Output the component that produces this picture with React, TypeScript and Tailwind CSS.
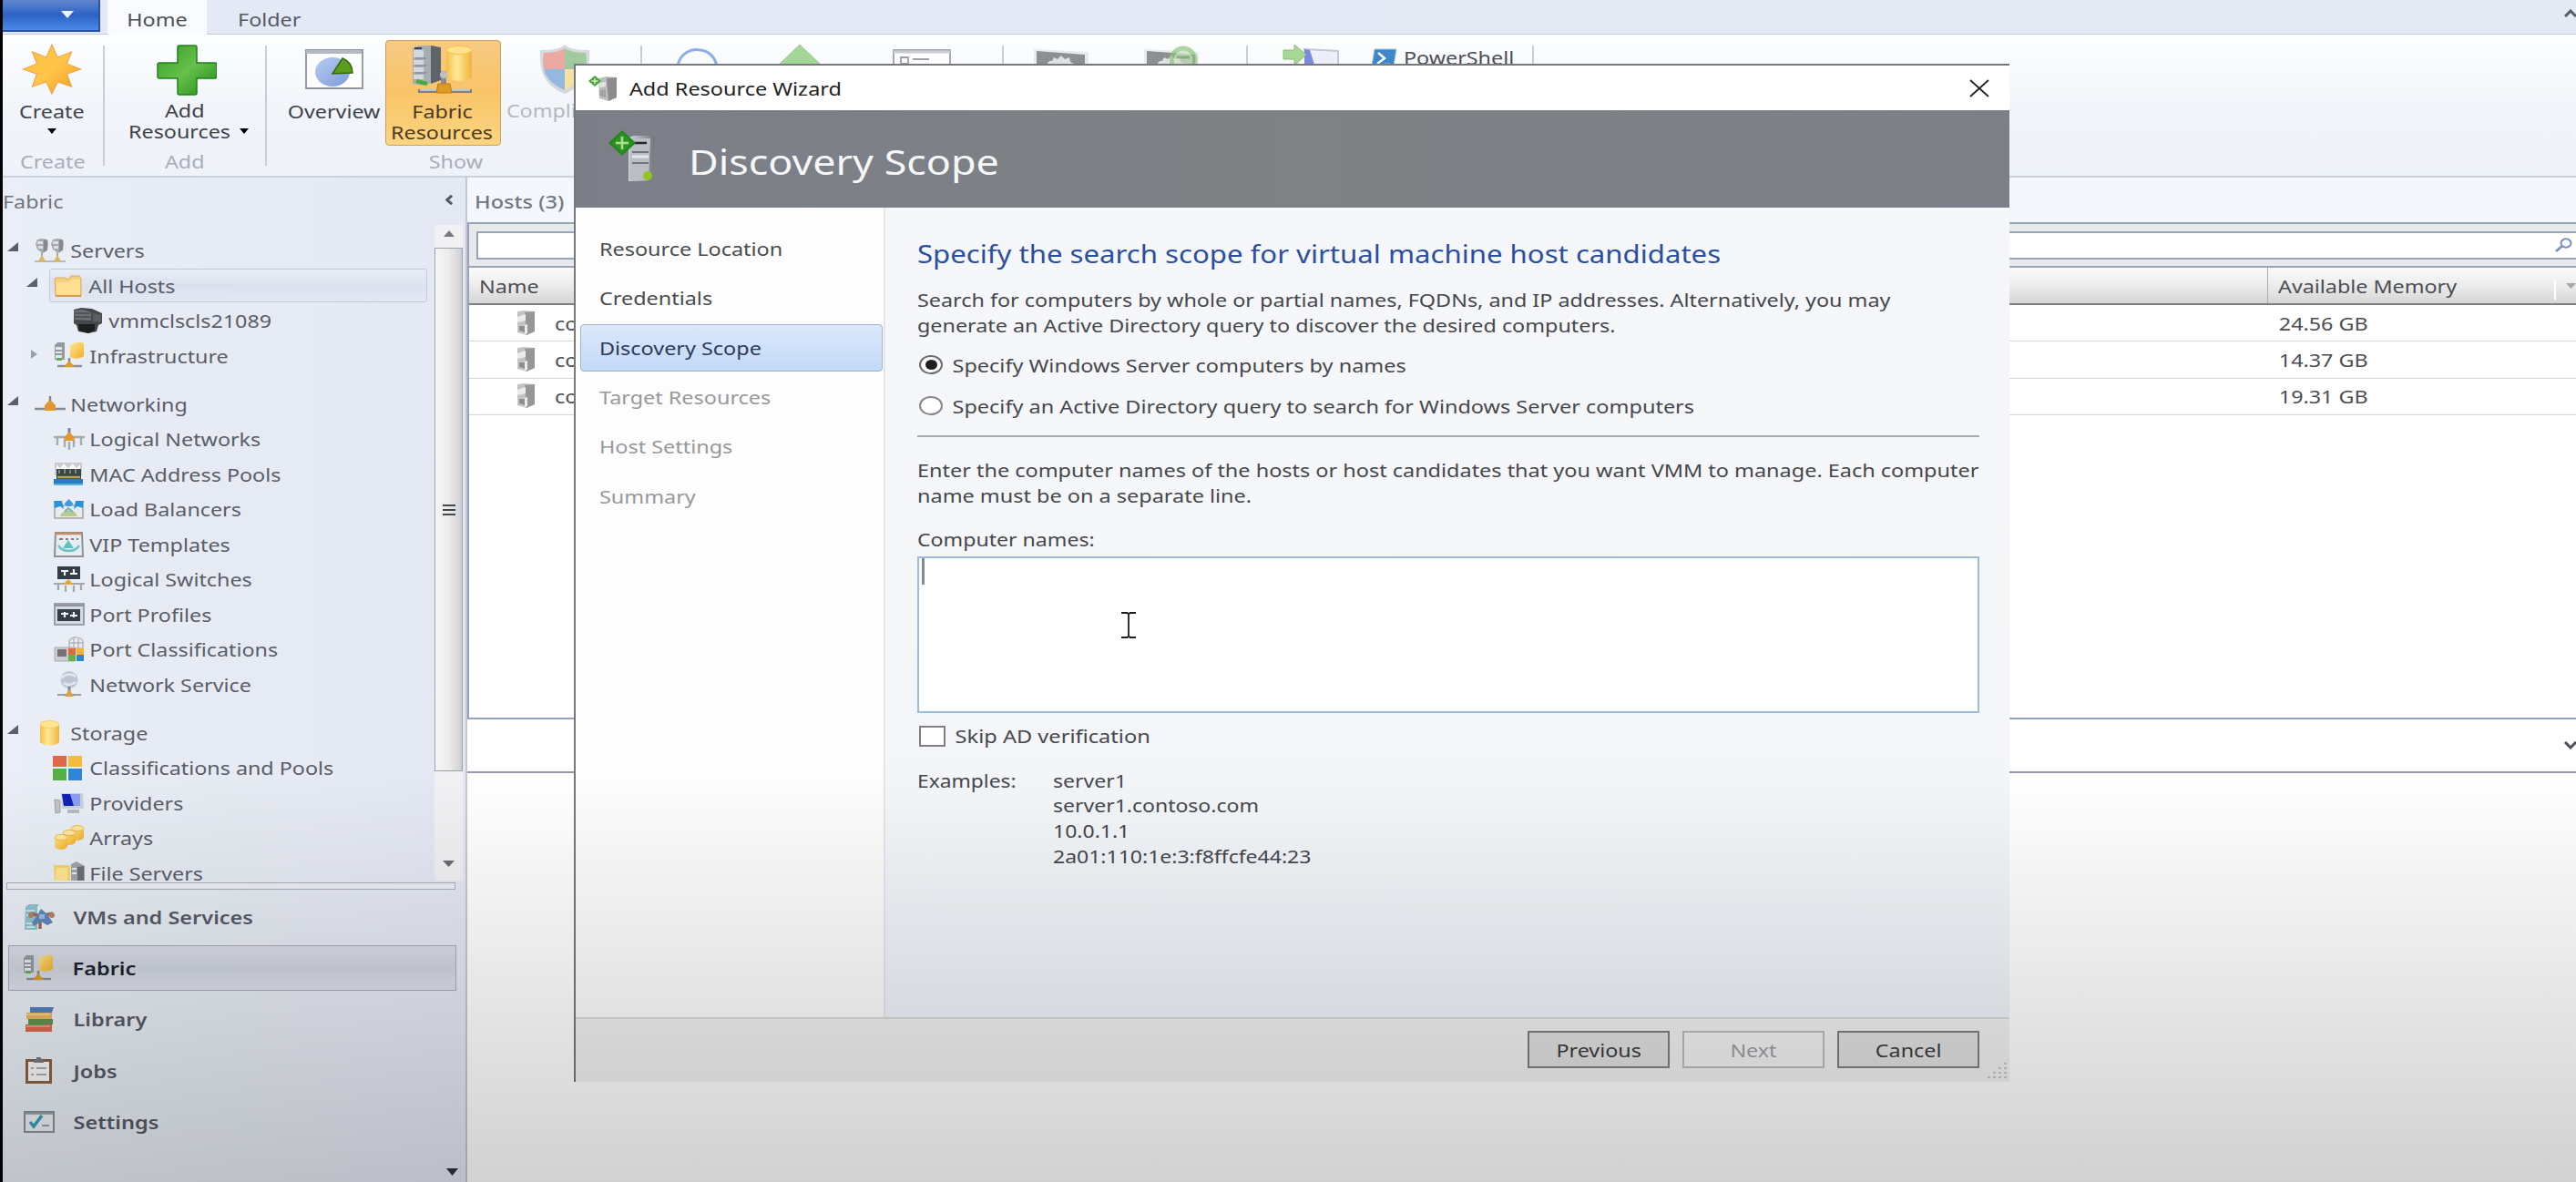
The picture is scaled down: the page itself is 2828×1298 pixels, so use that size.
import React from "react";

type IconProps = { className?: string };

function T({ children, className = "", sx = "scale-x-[1.165]", o = "origin-left" }: { children: React.ReactNode; className?: string; sx?: string; o?: string }) {
  return <span className={`inline-block translate-y-px whitespace-nowrap ${o} ${sx} ${className}`}>{children}</span>;
}

/* ---------- shared drawings ---------- */

function Svg({ className = "", box, children }: { className?: string; box: string; children: React.ReactNode }) {
  return (
    <svg className={`block shrink-0 ${className}`} viewBox={box} preserveAspectRatio="none" fill="none">
      {children}
    </svg>
  );
}

function Defs() {
  return (
    <svg className="absolute size-0" aria-hidden="true">
      <defs>
        <linearGradient id="gold" x1="0" x2="1" y1="0" y2="1">
          <stop offset="0" stopColor="#ffe694" />
          <stop offset="1" stopColor="#f3ae1e" />
        </linearGradient>
        <linearGradient id="cyl" x1="0" x2="1" y1="0" y2="0">
          <stop offset="0" stopColor="#f5bf45" />
          <stop offset=".4" stopColor="#ffe99a" />
          <stop offset="1" stopColor="#efb43a" />
        </linearGradient>
        <linearGradient id="steel" x1="0" x2="1" y1="0" y2="0">
          <stop offset="0" stopColor="#d3d7dc" />
          <stop offset="1" stopColor="#70757c" />
        </linearGradient>
        <linearGradient id="green" x1="0" x2="1" y1="0" y2="1">
          <stop offset="0" stopColor="#2f9a24" />
          <stop offset=".5" stopColor="#67c14c" />
          <stop offset="1" stopColor="#1f8a17" />
        </linearGradient>
        <linearGradient id="sun" x1="0" x2="1" y1="0" y2="1">
          <stop offset="0" stopColor="#f9bd3f" />
          <stop offset=".5" stopColor="#ffc64a" />
          <stop offset="1" stopColor="#f29a1a" />
        </linearGradient>
        <linearGradient id="pie" x1="0" x2="1" y1="0" y2="1">
          <stop offset="0" stopColor="#b9cdf2" />
          <stop offset="1" stopColor="#7d9bdb" />
        </linearGradient>
      </defs>
    </svg>
  );
}

const FabricBig = () => (
  <Svg className="h-[54px] w-[68px]" box="0 0 68 54">
    <path d="M2 3l6-3h14v41l-8 3-12-2z" fill="#a8adb4" />
    <path d="M22 0l11 2v36l-11 4z" fill="#5e6369" />
    <path d="M3 5h11v8H3zM3 16h11v5H3zM3 24h11v5H3zM3 32h11v5H3z" fill="#d3d8de" />
    <path d="M4 3h8" stroke="#3a3f44" strokeWidth="2" />
    <path d="M5 14h12M5 22h12M5 30h12" stroke="#7c8189" strokeWidth="1.2" />
    <path d="M6 39l12 3" stroke="#42ae36" strokeWidth="4" />
    <path d="M39 4v31c6 5 21 5 28 0V4z" fill="url(#cyl)" />
    <ellipse cx="53" cy="5" rx="14" ry="4.5" fill="#ffe28a" stroke="#f3c04c" />
    <path d="M8 50h59" stroke="#7c7f87" strokeWidth="4" />
    <path d="M10 49h55" stroke="#d9dce1" strokeWidth="1.4" />
    <path d="M36 28v16" stroke="#8a8d92" strokeWidth="6" />
    <circle cx="36" cy="32" r="4" fill="#bdc0c5" />
    <path d="M30 42h13l2 10H28z" fill="#e09a22" stroke="#b97b16" />
  </Svg>
);

const FabricSmall = ({ className = "" }: IconProps) => (
  <Svg className={`h-[29px] w-[34px] ${className}`} box="0 0 34 29">
    <path d="M1 3l3-3h8v19H1z" fill="#9499a0" />
    <path d="M2 5h7v3H2zM2 10h7v2H2zM2 14h7v4H2z" fill="#e4e8ee" />
    <path d="M3 17h6v3H3z" fill="#5fae55" />
    <path d="M18 3v13c4 3 11 2 15-1V1c-5-2-11-1-15 2z" fill="url(#gold)" />
    <path d="M4 26h27" stroke="#8b8f96" strokeWidth="2.4" />
    <path d="M17 17v6" stroke="#85888e" strokeWidth="2.5" />
    <path d="M17 20l6 7H11z" fill="#dd9a26" />
  </Svg>
);

const ServersIcon = () => (
  <Svg className="h-[27px] w-[34px]" box="0 0 34 27">
    {[0, 17].map((x) => (
      <g key={x} transform={`translate(${x} 0)`}>
        <path d="M3 1l5-1 6 1 1 4-1 8-5 3-6-4-2-6z" fill="#a5a9b0" />
        <path d="M3 3h6v3H3zM4 8h5v3H4z" fill="#dce0e6" />
        <path d="M10 1l4 1v10l-4 3z" fill="#858990" />
        <path d="M8 15v5" stroke="#a8acb3" strokeWidth="2" />
        <path d="M0 25h17" stroke="#a8acb3" strokeWidth="1.6" />
        <path d="M8 18l4 7H4z" fill="#e0b458" />
      </g>
    ))}
  </Svg>
);

const FolderIcon = () => (
  <Svg className="h-[24px] w-[32px]" box="0 0 32 24">
    <path d="M1 4l2-1h9l4 2 3-4h9l2 3v19H2z" fill="#f6d07c" stroke="#d9a956" />
    <path d="M3 8h14l3-3h9v17H3z" fill="#ffdf93" />
    <path d="M2 23h28" stroke="#c98c3e" strokeWidth="1.4" />
  </Svg>
);

const ClusterIcon = () => (
  <Svg className="h-[28px] w-[33px]" box="0 0 33 28">
    <path d="M1 2l8-2 12 1 11 5v11l-4 2-2 7-9 2-11-2-2-7-3-2z" fill="#454749" />
    <path d="M1 3l10-1 9 3v9L2 13z" fill="#6d7073" />
    <path d="M2 6h17M2 10h17" stroke="#4a4c4f" strokeWidth="1.5" />
    <path d="M22 6l9 2v8l-9-1z" fill="#5c5e61" />
    <path d="M6 18h18v7l-7 3-10-3z" fill="#1d1e1f" />
  </Svg>
);

const NetworkingIcon = () => (
  <Svg className="h-[18px] w-[34px]" box="0 0 34 18">
    <path d="M0 14h34" stroke="#858b94" strokeWidth="2.6" />
    <path d="M17 0v7" stroke="#80858d" strokeWidth="2.5" />
    <path d="M17 4l6 6v6H11v-6z" fill="#e0982b" />
  </Svg>
);

const LegsIcon = () => (
  <Svg className="h-[26px] w-[34px]" box="0 0 34 26">
    <path d="M0 11h34M4 11v9M12 14v8M22 14v8M30 11v9M17 16v9" stroke="#a6aab1" strokeWidth="2.4" />
    <path d="M17 1v6" stroke="#80858d" strokeWidth="3" />
    <path d="M17 5l6 7-1 3H12l-1-3z" fill="#e0982b" />
  </Svg>
);

const MacIcon = () => (
  <Svg className="h-[27px] w-[33px]" box="0 0 33 27">
    <path d="M1 1h30v14H1z" fill="#c7cbd0" />
    <path d="M3 3l4 4 4-5 5 5 5-5 4 5 4-4v5H3z" fill="#f5f7f8" />
    <path d="M3 8h27v11H3z" fill="#3a4743" />
    <path d="M6 9v4M12 8v5M18 9v4M24 8v5" stroke="#7f8a83" strokeWidth="2" />
    <path d="M4 17h25" stroke="#b5a552" strokeWidth="2.4" />
    <path d="M0 19h32v6H0z" fill="#2a7cc2" />
    <path d="M0 25h32" stroke="#58b1de" strokeWidth="2" />
  </Svg>
);

const LoadIcon = () => (
  <Svg className="h-[22px] w-[33px]" box="0 0 33 22">
    <path d="M1 7h31v14H1z" fill="#e7ecee" stroke="#a8a39b" strokeWidth="1.5" />
    <path d="M0 2h9l2 9-4-3-6 2zM33 2h-9l-2 9 4-3 6 2z" fill="#2a92dd" />
    <path d="M16.500 0l5 5-3 3h-4l-3-3z" fill="#3c9be4" />
    <path d="M7 19c2-8 16-9 19 0z" fill="#b8c98a" />
    <path d="M12 14l4-4 5 4" stroke="#68b6c8" strokeWidth="2" />
  </Svg>
);

const VipIcon = () => (
  <Svg className="h-[28px] w-[33px]" box="0 0 33 28">
    <path d="M2 1h29l1 26H1z" fill="#e9edf0" stroke="#8c9198" strokeWidth="2" />
    <path d="M1 2h30" stroke="#c98b68" strokeWidth="2.6" />
    <path d="M6 8h4M13 8h3M19 8h3M25 8h2" stroke="#76858d" strokeWidth="1.8" />
    <path d="M16 9l6 9H10z" fill="#5fc0c2" />
    <path d="M5 15c5 8 18 8 23 0" stroke="#6cc3cc" strokeWidth="2.4" />
  </Svg>
);

const SwitchIcon = () => (
  <Svg className="h-[28px] w-[34px]" box="0 0 34 28">
    <path d="M4 0h25v14H4z" fill="#333d48" />
    <path d="M8 5h8M12 4v6M18 8h8M22 3v6" stroke="#f0f4f8" strokeWidth="2.2" />
    <path d="M0 19h34M5 19v7M13 21v7M22 21v7M30 19v7" stroke="#a3a7af" strokeWidth="2.2" />
    <path d="M16 14l6 6H10z" fill="#e4a63d" />
  </Svg>
);

const PortProfileIcon = () => (
  <Svg className="h-[25px] w-[34px]" box="0 0 34 25">
    <path d="M1 1h32v23H1z" fill="#d5d9e1" stroke="#9a9fa9" strokeWidth="2" />
    <path d="M1 3h32" stroke="#8f949e" strokeWidth="2" />
    <path d="M4 7h25v13H4z" fill="#333d48" />
    <path d="M8 12h8M12 10v6M18 14h8M22 10v6" stroke="#f0f4f8" strokeWidth="2.2" />
  </Svg>
);

const PortClassIcon = () => (
  <Svg className="h-[28px] w-[34px]" box="0 0 34 28">
    <path d="M17 5c3-6 13-5 15 0v8H17zM22 2v11M27 2v11M17 7h15" fill="#e8ebef" stroke="#b2b7be" strokeWidth="1.5" />
    <path d="M1 12h22v15H1z" fill="#c9ccd2" stroke="#a7abb2" />
    <path d="M4 14h10v8H4z" fill="#7b6f75" />
    <path d="M16 13h8v7h-8z" fill="#e06a3c" />
    <path d="M25 13h8v7h-8z" fill="#f0b23b" />
    <path d="M16 20h8v7h-8z" fill="#63b346" />
    <path d="M25 20h8v7h-8z" fill="#2f86cf" />
  </Svg>
);

const NetServiceIcon = () => (
  <Svg className="h-[29px] w-[28px]" box="0 0 28 29">
    <circle cx="14" cy="9.500" r="9.500" fill="#bcc5d6" />
    <path d="M5 8c4-5 12-6 16-2M8 13c4 3 9 2 13-1" stroke="#e3e8f0" strokeWidth="2.5" />
    <path d="M14 17v6" stroke="#85898f" strokeWidth="3" />
    <path d="M1 26h26" stroke="#989ca4" strokeWidth="2" />
    <path d="M14 20l5 8H9z" fill="#dda23a" />
  </Svg>
);

const StorageIcon = () => (
  <Svg className="h-[28px] w-[23px]" box="0 0 23 28">
    <path d="M1 4v20c5 5 16 5 21 0V4z" fill="url(#cyl)" />
    <ellipse cx="11.500" cy="4.500" rx="10.500" ry="4" fill="#ffe590" stroke="#f5cf66" />
  </Svg>
);

const ColorSquares = () => (
  <Svg className="-ml-[4px] h-[27px] w-[32px]" box="0 0 32 27">
    <path d="M0 0h15v12H0z" fill="#e0684a" />
    <path d="M17 0h15v12H17z" fill="#f5b93e" />
    <path d="M0 14h15v13H0z" fill="#58ad43" />
    <path d="M17 14h15v13H17z" fill="#2f86d6" />
  </Svg>
);

const ProvidersIcon = () => (
  <Svg className="h-[24px] w-[34px]" box="0 0 34 24">
    <path d="M8 1h24l1 17H9z" fill="#ccd0d9" />
    <path d="M9 2h20v13H11z" fill="#8aa0f0" />
    <path d="M9 2h9l4 13H11z" fill="#1320b8" />
    <path d="M15 21h13" stroke="#b4b8c0" strokeWidth="4" />
    <path d="M1 8l6 1v13l-5 1z" fill="#c0c4cb" stroke="#9da1a9" />
  </Svg>
);

const ArraysIcon = () => (
  <Svg className="h-[28px] w-[34px]" box="0 0 34 28">
    {[[19, 0], [10, 5], [1, 10]].map(([x, y]) => (
      <g key={x} transform={`translate(${x} ${y})`}>
        <path d="M0 3v11c3 4 11 4 14 0V3z" fill="url(#gold)" />
        <ellipse cx="7" cy="3.500" rx="7" ry="3" fill="#ffe7a0" stroke="#eeb94a" />
      </g>
    ))}
  </Svg>
);

const FileServersIcon = () => (
  <Svg className="h-[26px] w-[34px]" box="0 0 34 26">
    <path d="M0 4h18v20H1z" fill="#f5d56c" />
    <path d="M3 7h12v15H2z" fill="#ffe68f" />
    <path d="M19 3l6-3 9 5v16l-8 4-7-3z" fill="#a0a4aa" />
    <path d="M26 6l7-1v16l-7 4z" fill="#6b6f75" />
    <path d="M20 8h5M20 13h5" stroke="#e9ecf0" strokeWidth="2" />
  </Svg>
);

const HostIcon = () => (
  <Svg className="h-[28px] w-[21px]" box="0 0 21 28">
    <path d="M1 1l7-1 12 1v22l-9 4-10-3z" fill="#c4c4c4" />
    <path d="M9 2l11-1v22l-9 4z" fill="#979797" />
    <path d="M1 7l9-3v7L1 13zM9 16l3-1v10l-3 1z" fill="#ececec" />
    <path d="M3 17h6v7l-6-2z" fill="#8f8f8f" />
  </Svg>
);

/* navigation pane */
const VmsIcon = () => (
  <Svg className="h-[29px] w-[34px]" box="0 0 34 29">
    <path d="M2 3l4-3h11l-2 3v25H1z" fill="#8ec3d0" />
    <path d="M3 7h9M3 12h6M3 21h9M3 25h9" stroke="#e0f0f4" strokeWidth="1.6" />
    <path d="M8 10l10 3 14-3M18 13v14" stroke="#a5674d" strokeWidth="3.500" />
    <path d="M19 5l7 6 6 9-6 3-7-4-8 5-2-4 6-8z" fill="#5f87bb" />
    <path d="M17 11h6v5h-6z" fill="#9cbce0" />
    <circle cx="8" cy="12" r="3" fill="#b98166" />
    <circle cx="31" cy="12" r="3" fill="#b98166" />
  </Svg>
);

const LibraryIcon = () => (
  <Svg className="h-[27px] w-[32px]" box="0 0 32 27">
    <path d="M6 0h26l-2 6H6z" fill="#5480bd" />
    <path d="M2 6h28v7H2z" fill="#e8b563" />
    <path d="M2 8h26" stroke="#f5dc9e" strokeWidth="1.5" />
    <path d="M4 13h27v6H4z" fill="#5f9250" />
    <path d="M1 19h29v8H1z" fill="#d96a4e" />
    <path d="M2 21h26" stroke="#f0a88f" strokeWidth="1.5" />
  </Svg>
);

const JobsIcon = () => (
  <Svg className="h-[30px] w-[31px]" box="0 0 31 30">
    <path d="M1 2h29v27H1z" fill="#8a6243" />
    <path d="M4 5h23v21H4z" fill="#fafafa" />
    <path d="M10 3h11v3H10zM13 0h5v4h-5z" fill="#777c84" />
    <path d="M7 12h3M13 12h11M7 19h3M13 19h11" stroke="#a9adb3" strokeWidth="2" />
  </Svg>
);

const SettingsIcon = () => (
  <Svg className="h-[24px] w-[34px]" box="0 0 34 24">
    <path d="M1 1h32v22H1z" fill="#eef1f4" stroke="#8c9199" strokeWidth="2" />
    <path d="M2 3h30" stroke="#a3a8b0" strokeWidth="2" />
    <path d="M7 12l4 5 9-12" stroke="#3b9fb8" strokeWidth="3.500" />
    <path d="M20 16h8" stroke="#9da2a9" strokeWidth="2" />
  </Svg>
);

/* ribbon icons */
const SunIcon = () => (
  <Svg className="h-[56px] w-[66px]" box="0 0 64 64">
    <path d="M32 1l6 16L53 10l-5 15 15 7-15 6 5 16-15-6-6 15-6-15-15 6 5-16L1 32l15-7-5-15 15 7z" fill="url(#sun)" stroke="#eda24a" />
  </Svg>
);

const PlusIcon = () => (
  <Svg className="h-[56px] w-[66px]" box="0 0 66 56">
    <path d="M25 1h17q2 0 2 2v17h20q2 0 2 2v13q0 2-2 2H44v16q0 2-2 2H25q-2 0-2-2V37H3q-2 0-2-2V22q0-2 2-2h20V3q0-2 2-2z" fill="url(#green)" stroke="#20801b" strokeWidth="1.500" />
  </Svg>
);

const OverviewIcon = () => (
  <Svg className="h-[44px] w-[64px]" box="0 0 64 44">
    <path d="M1 1h62v42H1z" fill="#fdfdfe" stroke="#8f939c" strokeWidth="1.800" />
    <path d="M1 3h61" stroke="#b4b8c2" strokeWidth="4" />
    <ellipse cx="30" cy="25" rx="19" ry="16" fill="url(#pie)" />
    <path d="M30 27L41 10c7 3 11 9 11 16z" fill="#5a9d1d" stroke="#2f6a0f" strokeWidth="1.500" />
  </Svg>
);

const ShieldIcon = () => (
  <Svg className="h-[54px] w-[56px] opacity-50" box="0 0 56 54">
    <path d="M28 0c7 6 17 6 27 6 1 22-4 39-27 48C5 45 0 28 1 6c10 0 20 0 27-6z" fill="#b5b9be" />
    <path d="M28 4v23H5C4 20 4 15 5 9c9 0 17-1 23-5z" fill="#e0574a" />
    <path d="M28 4v23h23c1-7 1-12 0-18-9 0-17-1-23-5z" fill="#4d9a43" />
    <path d="M28 27v23C15 44 7 37 5 27z" fill="#3579c4" />
    <path d="M28 27v23c13-6 21-13 23-23z" fill="#f3cb4c" />
  </Svg>
);

const RefreshIcon = () => (
  <Svg className="h-[44px] w-[50px] opacity-60" box="0 0 50 44">
    <path d="M3 20C6 6 18 1 28 3c10 1 17 9 18 19" stroke="#3f7fdb" strokeWidth="3" />
  </Svg>
);

const UpIcon = () => (
  <Svg className="h-[44px] w-[92px] opacity-55" box="0 0 96 44">
    <path d="M48 0l48 44H0z" fill="#5fb846" stroke="#4f9d42" />
  </Svg>
);

const PropsIcon = () => (
  <Svg className="h-[44px] w-[64px] opacity-70" box="0 0 64 44">
    <path d="M1 1h62v42H1z" fill="#fff" stroke="#85888e" strokeWidth="2" />
    <path d="M1 3h62" stroke="#b5b8be" strokeWidth="3" />
    <path d="M9 9h8v7H9zM22 11h18M9 22h8" stroke="#777a80" strokeWidth="1.800" />
  </Svg>
);

const ScreenGear = () => (
  <Svg className="h-[44px] w-[60px] opacity-75" box="0 0 60 44">
    <path d="M0 0l60 3v40H0z" fill="#e4e5e6" />
    <path d="M3 2l53 4v36H3z" fill="#6a6c6f" />
    <path d="M14 20c0-5 3-8 6-7l2-4 4 2 4-4 4 4 5-2 1 5 6 3v8H14z" fill="#d7d9da" />
  </Svg>
);

const RestartBadge = () => (
  <Svg className="-mt-1 -ml-8 h-[36px] w-[32px] opacity-70" box="0 0 32 36">
    <circle cx="15" cy="16" r="13" fill="#cfe6c3" stroke="#8cc67c" strokeWidth="5" />
    <path d="M8 13h14" stroke="#7fbd6e" strokeWidth="3" />
  </Svg>
);

const ConnectIcon = () => (
  <Svg className="h-[40px] w-[62px] opacity-75" box="0 0 62 40">
    <path d="M24 5l37 2v32H28z" fill="#e8ecfa" stroke="#b5b8c4" strokeWidth="2" />
    <path d="M24 5l6 1 5 16v12H24z" fill="#4f62d8" />
    <path d="M1 6h12V0l13 11-13 12v-7H1z" fill="#8acb73" stroke="#62ab4f" />
  </Svg>
);

const PsIcon = () => (
  <Svg className="h-[26px] w-[29px]" box="0 0 29 26">
    <path d="M4 1h24l-4 24H0z" fill="#3d86c9" stroke="#9cc6ea" />
    <path d="M8 5l7 6-8 6M15 18h6" stroke="#fff" strokeWidth="2.500" />
  </Svg>
);

/* dialog icons */
const DialogIcon = () => (
  <Svg className="h-[28px] w-[32px]" box="0 0 32 28">
    <path d="M11 3l8-2 12 1v22l-9 4-10-3z" fill="#bdbdbd" />
    <path d="M20 3l11-1v22l-9 4z" fill="#8c8c8c" />
    <path d="M12 8l7-1v5l-7 1z" fill="#e2e2e2" />
    <path d="M12 16l7-1v9l-7-2z" fill="#a3a3a3" />
    <path d="M7 0l7 6-7 6-7-6z" fill="#4fa33f" />
    <path d="M3.500 6h7M7 3v6" stroke="#c9f0b3" strokeWidth="1.600" />
  </Svg>
);

const ScopeIcon = () => (
  <Svg className="h-[57px] w-[53px]" box="0 0 53 57">
    <path d="M22 8l6-2h23l-3 47-6 3H22z" fill="url(#steel)" />
    <path d="M24 9h22l-2 46H23z" fill="#b9bec6" />
    <path d="M26 14h16" stroke="#23272c" strokeWidth="2.500" />
    <path d="M26 24h18M26 36h18" stroke="#70757d" strokeWidth="2" />
    <path d="M26 29h18" stroke="#e4e7eb" strokeWidth="3" />
    <circle cx="43" cy="50" r="5" fill="#93c420" />
    <path d="M15 0l15 14-15 14L0 14z" fill="#22861a" />
    <path d="M15 3l11 11-11 11L4 14z" fill="#2f9425" />
    <path d="M8 14h14M15 7v14" stroke="#a6e28d" strokeWidth="2.600" />
  </Svg>
);

/* ---------- tree ---------- */

function Row({ icon, label, level, expand, sel, gap }: { icon: React.ReactNode; label: string; level: number; expand?: "open" | "closed"; sel?: boolean; gap?: boolean }) {
  const indent = level === 0 ? "pl-[5px]" : level === 1 ? "pl-[26px]" : "pl-[47px]";
  return (
    <div className={`flex h-[38.5px] shrink-0 items-center ${indent} ${gap ? "mt-[14.5px]" : ""}`}>
      <div className="-mt-2 flex w-[25px] shrink-0 justify-start">
        {expand === "open" && (
          <Svg className="h-[10px] w-[12px]" box="0 0 12 10">
            <path d="M12 0v10H0z" fill="#5b5f69" />
          </Svg>
        )}
        {expand === "closed" && (
          <Svg className="mt-1 ml-1 h-[12px] w-[9px]" box="0 0 9 12">
            <path d="M1 1l7 5-7 5z" fill="#9a9eaa" />
          </Svg>
        )}
      </div>
      <div className={`flex h-[37px] items-center ${sel ? "w-[415px] rounded-[3px] border-[1.5px] border-[#c3c8d8] bg-linear-to-b from-[#e9edf7] via-[#dbe2ee] to-[#e2e7f3]" : "pl-[1.5px]"}`}>
        <div className="flex w-[40px] shrink-0 items-center justify-center">{icon}</div>
        <T className="pl-[2px] text-[20px] text-[#595d67]">{label}</T>
      </div>
    </div>
  );
}

const tree: React.ComponentProps<typeof Row>[] = [
  { icon: <ServersIcon />, label: "Servers", level: 0, expand: "open" },
  { icon: <FolderIcon />, label: "All Hosts", level: 1, expand: "open", sel: true },
  { icon: <ClusterIcon />, label: "vmmclscls21089", level: 2 },
  { icon: <FabricSmall />, label: "Infrastructure", level: 1, expand: "closed" },
  { icon: <NetworkingIcon />, label: "Networking", level: 0, expand: "open", gap: true },
  { icon: <LegsIcon />, label: "Logical Networks", level: 1 },
  { icon: <MacIcon />, label: "MAC Address Pools", level: 1 },
  { icon: <LoadIcon />, label: "Load Balancers", level: 1 },
  { icon: <VipIcon />, label: "VIP Templates", level: 1 },
  { icon: <SwitchIcon />, label: "Logical Switches", level: 1 },
  { icon: <PortProfileIcon />, label: "Port Profiles", level: 1 },
  { icon: <PortClassIcon />, label: "Port Classifications", level: 1 },
  { icon: <NetServiceIcon />, label: "Network Service", level: 1 },
  { icon: <StorageIcon />, label: "Storage", level: 0, expand: "open", gap: true },
  { icon: <ColorSquares />, label: "Classifications and Pools", level: 1 },
  { icon: <ProvidersIcon />, label: "Providers", level: 1 },
  { icon: <ArraysIcon />, label: "Arrays", level: 1 },
  { icon: <FileServersIcon />, label: "File Servers", level: 1 },
];

const nav = [
  { icon: <VmsIcon />, label: "VMs and Services" },
  { icon: <FabricSmall />, label: "Fabric", sel: true },
  { icon: <LibraryIcon />, label: "Library" },
  { icon: <JobsIcon />, label: "Jobs" },
  { icon: <SettingsIcon />, label: "Settings" },
];

function Arrow({ className = "", up }: { className?: string; up?: boolean }) {
  return (
    <Svg className={className} box="0 0 12 8">
      <path d={up ? "M0 8l6-8 6 8z" : "M0 0h12L6 8z"} fill="currentColor" />
    </Svg>
  );
}

function Sidebar() {
  return (
    <aside className="flex w-[508px] shrink-0 flex-col bg-linear-to-r from-[#eaeff7] via-[#e6ebf3] to-[#e4e8f4]">
      <div className="flex h-[52px] shrink-0 items-center justify-between pr-[14px]">
        <T className="text-[20px] text-[#70747d]">Fabric</T>
        <Svg className="-mt-1 h-[11px] w-[8px]" box="0 0 9 13">
          <path d="M8 1L2 6.500 8 12" stroke="#555963" strokeWidth="3.500" />
        </Svg>
      </div>
      <div className="flex h-[720px] shrink-0">
        <div className="flex w-[474px] flex-col overflow-hidden pt-[9px]">
          {tree.map((r) => (
            <Row key={r.label} {...r} />
          ))}
        </div>
        <div className="flex w-[31px] flex-col items-center bg-[#f1f1f3]">
          <Arrow up className="mt-[6px] h-[7px] w-[12px] text-[#777b82]" />
          <div className="mt-[12px] flex h-[575px] w-[31px] flex-col items-center justify-center gap-[3px] border-[1.5px] border-[#9ea1a9] bg-linear-to-r from-[#f6f6f6] via-[#ececec] to-[#cfcfd3]">
            <div className="h-[2px] w-[14px] bg-[#44474c]" />
            <div className="h-[2px] w-[14px] bg-[#44474c]" />
            <div className="h-[2px] w-[14px] bg-[#44474c]" />
          </div>
          <Arrow className="mt-[98px] h-[7px] w-[13px] text-[#686c74]" />
        </div>
      </div>
      <div className="mt-[2px] ml-[4px] h-[8px] w-[493px] shrink-0 border-[1.5px] border-[#a9afba] bg-[#eceff5]" />
      <div className="flex flex-col pt-[2px] pl-[6px]">
        {nav.map((n) => (
          <div key={n.label} className="flex h-[56.2px] items-center">
            <div className={`flex h-[50px] w-[492px] items-center ${n.sel ? "border-[1.5px] border-[#a6abb5] bg-linear-to-b from-[#d9dde6] via-[#d0d5de] to-[#dde1ea]" : "pl-[1.5px]"}`}>
              <div className="flex w-[66px] shrink-0 justify-center pr-[2px]">{n.icon}</div>
              <T sx="scale-x-[1.175]" className={`pl-[3px] text-[20px] font-semibold ${n.sel ? "text-[#1c2230]" : "text-[#565b65]"}`}>{n.label}</T>
            </div>
          </div>
        ))}
      </div>
      <div className="mt-auto flex justify-end pr-[8px] pb-[7px]">
        <Arrow className="h-[8px] w-[13px] text-[#2e3340]" />
      </div>
    </aside>
  );
}

/* ---------- ribbon ---------- */

function Group({ className = "", label, children }: { className?: string; label?: string; children: React.ReactNode }) {
  return (
    <div className={`flex shrink-0 flex-col ${className}`}>
      <div className="flex h-[125px]">{children}</div>
      {label && (
        <div className="flex h-[28px] items-center justify-center">
          <T o="origin-center" className="text-[20px] text-[#a9adb7]">{label}</T>
        </div>
      )}
    </div>
  );
}

const Sep = () => <div className="mt-[12px] h-[132px] w-[2px] shrink-0 bg-[#c9cdd6]" />;

function RibbonText({ lines, className = "" }: { lines: React.ReactNode[]; className?: string }) {
  return (
    <div className={`flex flex-col items-center text-[20px] leading-[23px] ${className}`}>
      {lines.map((l, i) => (
        <T key={i} o="origin-center">{l}</T>
      ))}
    </div>
  );
}

function Ribbon() {
  return (
    <>
      <div className="flex h-[38px] shrink-0 border-b-[1.5px] border-[#c5cbdb] bg-linear-to-r from-[#e3e9f5] to-[#e4eaf4]">
        <div className="flex h-[35px] w-[107px] justify-center border-r-2 border-b-2 border-[#2a52a8] bg-linear-to-b from-[#5f86ce] via-[#2c62c4] via-50% to-[#4c8be8] pt-[12px] pl-[36px]">
          <Arrow className="h-[8px] w-[14px] text-[#eef4fd]" />
        </div>
        <div className="ml-[8px] flex h-[38px] w-[109px] items-center justify-center bg-[#fafbfe] pt-[4px]">
          <T o="origin-center" className="text-[20px] text-[#4a4e58]">Home</T>
        </div>
        <div className="flex w-[138px] items-center justify-center pt-[4px]">
          <T o="origin-center" className="text-[20px] text-[#555a65]">Folder</T>
        </div>
        <div className="ml-auto flex items-start pt-[10px]">
          <Svg className="h-[9px] w-[13px]" box="0 0 13 9">
            <path d="M1 8l6-6 6 6" stroke="#565b68" strokeWidth="3" />
          </Svg>
        </div>
      </div>
      <div className="flex h-[157px] shrink-0 border-b-2 border-[#cbd0db] bg-linear-to-b from-[#fdfeff] via-[#f2f5fa] to-[#eef2fa]">
        <Group className="w-[110px]" label="Create">
          <div className="flex w-[110px] flex-col items-center pt-[10px] pr-[2px] text-[#3d414b]">
            <SunIcon />
            <RibbonText className="mt-[6px]" lines={["Create"]} />
            <Arrow className="mt-[8px] h-[6px] w-[10px] text-black" />
          </div>
        </Group>
        <Sep />
        <Group className="w-[176px]" label="Add">
          <div className="flex w-[176px] flex-col items-center pt-[11px] pl-[4px] text-[#3d414b]">
            <PlusIcon />
            <RibbonText className="mt-[4px] pr-[4px]" lines={["Add"]} />
            <div className="flex items-center gap-[17px] pl-[12px] text-[20px] leading-[23px]">
              <T o="origin-center">Resources</T>
              <Arrow className="h-[6px] w-[10px] text-black" />
            </div>
          </div>
        </Group>
        <Sep />
        <Group className="w-[414px]" label="Show">
          <div className="flex w-[130px] shrink-0 flex-col items-center pt-[16px] pl-[18px] text-[#3d414b]">
            <OverviewIcon />
            <RibbonText className="mt-[12px]" lines={["Overview"]} />
          </div>
          <div className="mt-[6px] flex h-[116px] w-[127px] shrink-0 flex-col items-center rounded-[4px] border-[1.5px] border-[#c9a25a] bg-linear-to-b from-[#f7c983] via-[#f9c468] to-[#fbd582] pt-[5px] pr-[3px] text-[#4b3a1c]">
            <FabricBig />
            <RibbonText className="mt-[6px]" lines={["Fabric", "Resources"]} />
          </div>
          <div className="flex w-[132px] shrink-0 flex-col items-center pt-[11px] pl-[8px] text-[#b4b8c1]">
            <ShieldIcon />
            <RibbonText className="mt-[6px]" lines={["Compliance"]} />
          </div>
        </Group>
        <div className="-ml-[4px]" />
        <Sep />
        <Group className="w-[395px]">
          <div className="flex pt-[11px] pl-[36px]">
            <div className="mt-[3px]"><RefreshIcon /></div>
            <div className="ml-[41px]"><UpIcon /></div>
            <div className="mt-[5px] ml-[56px]"><PropsIcon /></div>
          </div>
        </Group>
        <Sep />
        <Group className="w-[266px]">
          <div className="flex pt-[16px] pl-[33px]">
            <ScreenGear />
            <div className="ml-[61px] flex"><ScreenGear /><RestartBadge /></div>
          </div>
        </Group>
        <Sep />
        <Group className="w-[312px]">
          <div className="flex items-start pt-[11px] pl-[38px]">
            <ConnectIcon />
            <div className="mt-[4px] ml-[35px]"><PsIcon /></div>
            <T className="-mt-[1px] ml-[7px] text-[20px] text-[#4a4e58]">PowerShell</T>
          </div>
        </Group>
        <Sep />
      </div>
    </>
  );
}

/* ---------- host list ---------- */

function Hosts() {
  return (
    <main className="flex min-w-0 grow flex-col border-l-2 border-[#c3c7d3] bg-white">
      <div className="flex h-[49px] shrink-0 items-center bg-[#f4f7fd] pt-[3px] pl-[8px]">
        <T sx="scale-x-[1.18]" className="text-[20px] font-medium text-[#737780]">Hosts (3)</T>
      </div>
      <div className="flex h-[546px] shrink-0 flex-col border-t-2 border-b-2 border-l-2 border-[#97a3b8]">
        <div className="flex h-[48px] shrink-0 items-center border-b-2 border-[#9aa6b6] bg-[#e8e9ea] pl-[8px]">
          <div className="flex h-[31px] grow items-center justify-end border-y-2 border-l-2 border-[#97a5ba] bg-white pr-[4px]">
            <Svg className="h-[16px] w-[19px]" box="0 0 19 16">
              <ellipse cx="12" cy="6" rx="5.500" ry="4.700" stroke="#7a8cc4" strokeWidth="2" />
              <path d="M8 9l-7 6" stroke="#7a8cc4" strokeWidth="2.600" />
            </Svg>
          </div>
        </div>
        <div className="flex h-[41px] shrink-0 items-center border-b-2 border-[#7d7f83] bg-linear-to-b from-[#fbfbfb] via-[#ececec] to-[#d6d6d6] text-[20px] text-[#4b4d52]">
          <div className="flex h-full w-[1975px] items-center border-r-[1.5px] border-[#a9abad] pl-[11px]">
            <T>Name</T>
          </div>
          <div className="flex h-full grow items-center pl-[11px]">
            <T>Available Memory</T>
            <div className="mt-[8px] ml-auto h-[22px] w-[2px] bg-white" />
            <Arrow className="ml-[11px] h-[6px] w-[11px] text-[#a4a6a9]" />
          </div>
        </div>
        {["24.56 GB", "14.37 GB", "19.31 GB"].map((m) => (
          <div key={m} className="flex h-[40.3px] shrink-0 items-center border-b-[1.5px] border-[#d5d6d8] text-[20px] text-[#4b4d52]">
            <div className="flex w-[1974px] items-center pl-[52px]">
              <HostIcon />
              <T className="pl-[18px]">co</T>
            </div>
            <T className="pl-[11px]">{m}</T>
          </div>
        ))}
      </div>
      <div className="flex h-[59px] shrink-0 items-center justify-end border-b-2 border-[#9199ab]">
        <Svg className="h-[9px] w-[13px]" box="0 0 13 9">
          <path d="M1 1l6 6 6-6" stroke="#4b4f56" strokeWidth="3" />
        </Svg>
      </div>
      <div className="grow bg-white" />
    </main>
  );
}

/* ---------- wizard ---------- */

const steps = [
  { label: "Resource Location", state: "done" },
  { label: "Credentials", state: "done" },
  { label: "Discovery Scope", state: "current" },
  { label: "Target Resources", state: "todo" },
  { label: "Host Settings", state: "todo" },
  { label: "Summary", state: "todo" },
];

function Lines({ lines, className = "", sx = "scale-x-[1.172]" }: { lines: string[]; className?: string; sx?: string }) {
  return (
    <div className={`flex flex-col items-start leading-[27.7px] ${className}`}>
      {lines.map((l) => (
        <T key={l} sx={sx}>{l}</T>
      ))}
    </div>
  );
}

function WizardButton({ label, disabled }: { label: string; disabled?: boolean }) {
  return (
    <button
      type="button"
      disabled={disabled}
      className={`flex h-[41px] w-[156px] items-center justify-center border-2 text-[20px] ${disabled ? "border-[#b9bbbd] bg-[#f3f3f3] text-[#9c9ea1]" : "border-[#7d7f82] bg-[#e1e1e1] text-[#3a3c40]"}`}
    >
      <T o="origin-center">{label}</T>
    </button>
  );
}

function Wizard() {
  return (
    <section className="absolute top-[70px] left-[627px] flex h-[1118px] w-[1576px] flex-col border-t-2 border-l-2 border-[#77787b] bg-white">
      <div className="flex h-[49px] shrink-0 items-center pl-[14px]">
        <DialogIcon />
        <T sx="scale-x-[1.172]" className="pl-[11px] text-[20px] text-[#222]">Add Resource Wizard</T>
        <Svg className="mr-[22px] ml-auto h-[20px] w-[22px]" box="0 0 22 20">
          <path d="M1 1l20 18M21 1L1 19" stroke="#222" strokeWidth="1.800" />
        </Svg>
      </div>
      <div className="flex h-[107px] shrink-0 items-center bg-linear-to-r from-[#7c7f88] via-[#7e8285] to-[#7d8088] pl-[36px]">
        <div className="-mt-[6px]"><ScopeIcon /></div>
        <T className="mt-[2px] pl-[30px] text-[38.5px] leading-[40px] text-[#f6f7f9]">Discovery Scope</T>
      </div>
      <div className="flex grow">
        <nav className="flex w-[340px] shrink-0 flex-col border-r-2 border-[#e4e6ea] bg-[#fdfdfd] pt-[18px] pl-[5px] text-[20px]">
          {steps.map((s) => (
            <div key={s.label} className="flex h-[54.3px] items-center">
              <div
                className={`flex h-[52px] w-[332px] items-center pl-[20px] ${
                  s.state === "current"
                    ? "rounded-[4px] border-[1.5px] border-[#9bb2d3] bg-linear-to-b from-[#dbe8fb] to-[#c3d9f8] text-[#2c3a58]"
                    : s.state === "done"
                      ? "border-[1.5px] border-transparent text-[#4a4b4e]"
                      : "border-[1.5px] border-transparent text-[#97989b]"
                }`}
              >
                <T sx="scale-x-[1.17]">{s.label}</T>
              </div>
            </div>
          ))}
        </nav>
        <div className="flex grow flex-col bg-linear-to-b from-[#f5f7fa] via-[#f5f6f8] to-[#f0f4fa] pr-[33px] pl-[35px] text-[20px] text-[#45474c]">
          <T sx="scale-x-[1.175]" className="mt-[33px] text-[26.5px] leading-[34px] text-[#2b4fa0]">Specify the search scope for virtual machine host candidates</T>
          <Lines
            sx="scale-x-[1.167]"
            className="mt-[20px]"
            lines={[
              "Search for computers by whole or partial names, FQDNs, and IP addresses. Alternatively, you may",
              "generate an Active Directory query to discover the desired computers.",
            ]}
          />
          <div className="mt-[17px] flex h-[27px] items-center pl-[2px]">
            <div className="flex h-[21px] w-[26px] items-center justify-center rounded-[50%] border-2 border-[#6b6d70] bg-white">
              <div className="h-[11px] w-[13px] rounded-[50%] bg-[#1f1f1f]" />
            </div>
            <T sx="scale-x-[1.173]" className="pl-[9px]">Specify Windows Server computers by names</T>
          </div>
          <div className="mt-[18px] flex h-[27px] items-center pl-[2px]">
            <div className="h-[21px] w-[26px] rounded-[50%] border-2 border-[#85878a] bg-white" />
            <T sx="scale-x-[1.173]" className="pl-[9px]">Specify an Active Directory query to search for Windows Server computers</T>
          </div>
          <div className="mt-[19px] h-[2px] shrink-0 bg-[#a9abae]" />
          <Lines
            className="mt-[22px]"
            lines={[
              "Enter the computer names of the hosts or host candidates that you want VMM to manage. Each computer",
              "name must be on a separate line.",
            ]}
          />
          <Lines sx="scale-x-[1.155]" className="mt-[20px]" lines={["Computer names:"]} />
          <div className="relative mt-[5px] h-[172px] shrink-0 border-2 border-[#9bbbe0] bg-white">
            <div className="ml-[3px] h-[29px] w-[3px] bg-[#8a8796]" />
            <Svg className="absolute top-[59px] left-[222px] h-[29px] w-[16px]" box="0 0 16 29">
              <path d="M0 1h6.500L8 2.500 9.500 1H16M0 28h6.500L8 26.500 9.500 28H16M8 2v25" stroke="#1c1c1c" strokeWidth="1.800" />
            </Svg>
          </div>
          <div className="mt-[12px] flex h-[27px] items-center pl-[2px]">
            <div className="h-[23px] w-[29px] border-2 border-[#7e8084] bg-white" />
            <T sx="scale-x-[1.18]" className="pl-[9px]">Skip AD verification</T>
          </div>
          <div className="mt-[21px] flex">
            <Lines sx="scale-x-[1.14]" className="w-[149px]" lines={["Examples:"]} />
            <Lines sx="scale-x-[1.15]" lines={["server1", "server1.contoso.com", "10.0.1.1", "2a01:110:1e:3:f8ffcfe44:23"]} />
          </div>
        </div>
      </div>
      <footer className="relative flex h-[71px] shrink-0 items-start justify-end gap-[14px] border-t-2 border-[#d9dadb] bg-[#f1f1f1] pt-[13px] pr-[33px]">
        <WizardButton label="Previous" />
        <WizardButton label="Next" disabled />
        <WizardButton label="Cancel" />
        <Svg className="absolute right-[2px] bottom-[3px] h-[20px] w-[23px]" box="0 0 23 20">
          <path
            d="M1 17h3v2H1zM7 17h3v2H7zM13 17h3v2h-3zM19 17h3v2h-3zM7 12h3v2H7zM13 12h3v2h-3zM19 12h3v2h-3zM13 7h3v2h-3zM19 7h3v2h-3zM19 2h3v2h-3z"
            fill="#c6c7c9"
          />
        </Svg>
      </footer>
    </section>
  );
}

export default function App() {
  return (
    <div className="relative flex h-[1298px] w-[2828px] flex-col overflow-hidden border-l-[3px] border-black bg-white font-['Noto_Sans','Open_Sans',sans-serif]">
      <Defs />
      <Ribbon />
      <div className="flex min-h-0 grow">
        <Sidebar />
        <Hosts />
      </div>
      <Wizard />
      {/* shade rising from the bottom edge */}
      <div className="pointer-events-none absolute inset-x-0 bottom-0 h-[450px] bg-linear-to-b from-black/0 to-black/18" />
    </div>
  );
}
